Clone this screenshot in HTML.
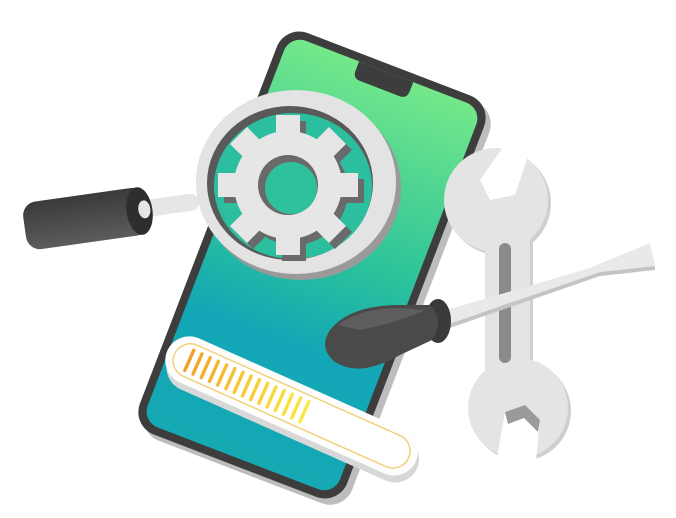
<!DOCTYPE html>
<html><head><style>html,body{margin:0;padding:0;background:#fff;width:676px;height:518px;overflow:hidden}</style></head>
<body>
<svg width="676" height="518" viewBox="0 0 676 518" xmlns="http://www.w3.org/2000/svg">
<defs>
<linearGradient id="scr" x1="0" y1="0" x2="0" y2="1">
<stop offset="0" stop-color="#74e88a"/><stop offset="0.45" stop-color="#2cc39a"/><stop offset="0.7" stop-color="#13a6b6"/><stop offset="1" stop-color="#15a9b4"/></linearGradient>
<linearGradient id="hd" x1="0" y1="0" x2="0" y2="1"><stop offset="0" stop-color="#3a3a3a"/><stop offset="1" stop-color="#5c5c5c"/></linearGradient>
</defs>
<!-- phone -->
<g transform="rotate(21 312 265)">
<rect x="208" y="54" width="222" height="430" rx="24" fill="#bdbdbd"/>
<rect x="201" y="50" width="222" height="430" rx="24" fill="#3d3d3d"/>
<rect x="209" y="58" width="206" height="414" rx="17" fill="url(#scr)"/>
<path d="M283 58 h58 v10 q0 8 -8 8 h-42 q-8 0 -8 -8z" fill="#3d3d3d"/>
</g>
<!-- left handle -->
<g transform="rotate(-8 90 218)">
<rect x="130" y="208" width="70" height="17" rx="8" fill="#e6e6e6"/>
<rect x="24" y="194" width="124" height="48" rx="14" fill="url(#hd)"/>
<ellipse cx="140" cy="218" rx="13" ry="24" fill="#2e2e2e"/>
<ellipse cx="145" cy="217" rx="6" ry="9" fill="#e6e6e6"/>
</g>
<!-- magnifier -->
<ellipse cx="301" cy="188" rx="100" ry="92" fill="#9a9a9a"/>
<ellipse cx="296" cy="182" rx="100" ry="92" fill="#e3e3e3"/>
<ellipse cx="290" cy="183" rx="83" ry="77" fill="#595959"/>
<ellipse cx="293" cy="186" rx="79" ry="73" fill="#2bbf9f"/>
<!-- gear -->
<g transform="translate(288 185)">
<g fill="#6a6a6a" transform="translate(6 6)">
<circle r="54"/>
<g id="teeth"><rect x="-12" y="-70" width="24" height="22"/></g>
<use href="#teeth" transform="rotate(45)"/><use href="#teeth" transform="rotate(90)"/><use href="#teeth" transform="rotate(135)"/><use href="#teeth" transform="rotate(180)"/><use href="#teeth" transform="rotate(225)"/><use href="#teeth" transform="rotate(270)"/><use href="#teeth" transform="rotate(315)"/>
</g>
<g fill="#e6e6e6">
<circle r="54"/>
<g id="t2"><rect x="-12" y="-70" width="24" height="22"/></g>
<use href="#t2" transform="rotate(45)"/><use href="#t2" transform="rotate(90)"/><use href="#t2" transform="rotate(135)"/><use href="#t2" transform="rotate(180)"/><use href="#t2" transform="rotate(225)"/><use href="#t2" transform="rotate(270)"/><use href="#t2" transform="rotate(315)"/>
</g>
<circle r="30" fill="#6a6a6a"/>
<circle cx="3" cy="3" r="26" fill="#2fc09c"/>
</g>
<!-- wrench -->
<g fill="#cfcfcf" transform="translate(3 3)">
<rect x="485" y="235" width="45" height="145" rx="6"/>
<circle cx="496" cy="200" r="52"/><circle cx="518" cy="408" r="50"/>
</g>
<g fill="#e4e4e4">
<rect x="485" y="235" width="45" height="145" rx="6"/>
<circle cx="496" cy="200" r="52"/><circle cx="518" cy="408" r="50"/>
</g>
<path d="M508 140 L530 150 L515 195 L490 200 L480 180 Z" fill="#fff"/>
<path d="M500 440 L505 412 L525 405 L540 420 L535 470 L495 470 Z" fill="#fff"/>
<path d="M505 412 L525 405 L540 420 L538 432 L524 418 L508 424 Z" fill="#9a9a9a"/>
<rect x="499" y="243" width="12" height="120" rx="6" fill="#8a8a8a"/>
<!-- screwdriver -->
<path d="M440 312 L590 268 L650 243 L655 266 L600 272 L443 326 Z" fill="#e9e9e9"/>
<path d="M443 326 L600 272 L655 266 L655 270 L600 276 L444 330Z" fill="#c4c4c4"/>
<ellipse cx="438" cy="321" rx="13" ry="22" fill="#3a3a3a"/>
<path d="M330 330 Q350 305 400 305 L430 305 Q445 320 432 340 L400 355 Q360 378 335 362 Q318 348 330 330Z" fill="#4a4a4a"/>
<path d="M338 325 Q360 308 400 308 L425 310 Q400 322 360 330 Z" fill="#5e5e5e"/>
<!-- progress bar -->
<g transform="rotate(24 292 405)">
<rect x="160" y="388" width="272" height="48" rx="24" fill="#d8d8d8"/>
<rect x="156" y="382" width="272" height="48" rx="24" fill="#fdfdfd"/>
<rect x="164" y="389" width="256" height="34" rx="17" fill="#fff" stroke="#f0d27a" stroke-width="1.5"/>
<g stroke-width="3.4" stroke-linecap="round">
<line x1="180" y1="395" x2="180" y2="417" stroke="#f0a028"/>
<line x1="189" y1="395" x2="189" y2="417" stroke="#f2a82a"/>
<line x1="198" y1="395" x2="198" y2="417" stroke="#f3af2c"/>
<line x1="207" y1="395" x2="207" y2="417" stroke="#f4b52e"/>
<line x1="216" y1="395" x2="216" y2="417" stroke="#f5bb30"/>
<line x1="225" y1="395" x2="225" y2="417" stroke="#f6c132"/>
<line x1="234" y1="395" x2="234" y2="417" stroke="#f6c634"/>
<line x1="243" y1="395" x2="243" y2="417" stroke="#f7cb36"/>
<line x1="252" y1="395" x2="252" y2="417" stroke="#f7d038"/>
<line x1="261" y1="395" x2="261" y2="417" stroke="#f8d43a"/>
<line x1="270" y1="395" x2="270" y2="417" stroke="#f8d83c"/>
<line x1="279" y1="395" x2="279" y2="417" stroke="#f9dc3e"/>
<line x1="288" y1="395" x2="288" y2="417" stroke="#f9e040"/>
<line x1="297" y1="395" x2="297" y2="417" stroke="#fae442"/>
<line x1="306" y1="395" x2="306" y2="417" stroke="#fae644"/>
</g>
</g>
</svg>
</body></html>
